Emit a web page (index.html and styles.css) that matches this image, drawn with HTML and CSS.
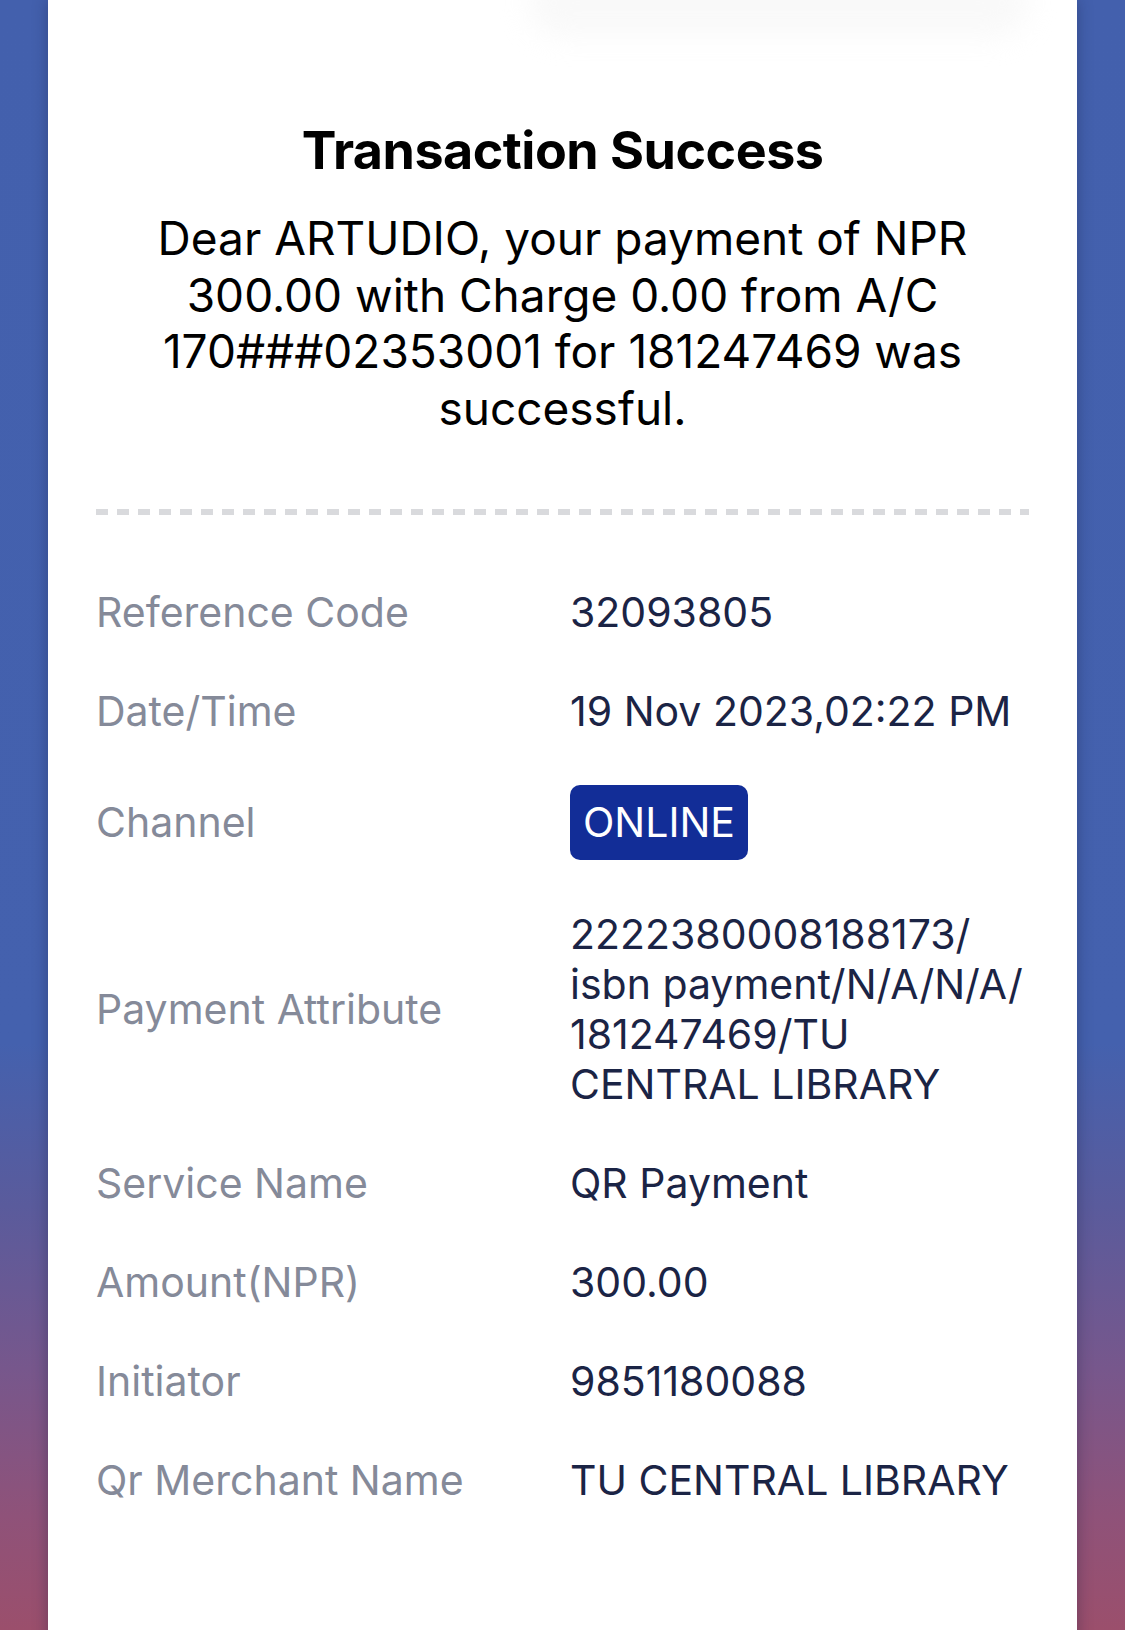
FILE: index.html
```html
<!DOCTYPE html>
<html lang="en">
<head>
<meta charset="utf-8">
<title>Transaction Success</title>
<link rel="stylesheet" href="styles.css">
</head>
<body>
<div class="page">
  <main class="card">
    <div class="ghost"></div>
    <h1 class="title">Transaction Success</h1>
    <p class="message">Dear ARTUDIO, your payment of NPR<br>300.00 with Charge 0.00 from A/C<br>170###02353001 for 181247469 was<br>successful.</p>
    <hr class="divider">
    <dl class="details">
      <dt class="label">Reference Code</dt>
      <dd class="value">32093805</dd>
      <dt class="label">Date/Time</dt>
      <dd class="value">19 Nov 2023,02:22 PM</dd>
      <dt class="label">Channel</dt>
      <dd class="value"><span class="badge">ONLINE</span></dd>
      <dt class="label">Payment Attribute</dt>
      <dd class="value">2222380008188173/<br>isbn payment/N/A/N/A/<br>181247469/TU<br>CENTRAL LIBRARY</dd>
      <dt class="label">Service Name</dt>
      <dd class="value">QR Payment</dd>
      <dt class="label">Amount(NPR)</dt>
      <dd class="value">300.00</dd>
      <dt class="label">Initiator</dt>
      <dd class="value">9851180088</dd>
      <dt class="label">Qr Merchant Name</dt>
      <dd class="value">TU CENTRAL LIBRARY</dd>
    </dl>
  </main>
</div>
</body>
</html>
```
FILE: styles.css
```css
html, body {
  margin: 0;
  padding: 0;
}
body {
  width: 1125px;
  height: 1630px;
  overflow: hidden;
  font-family: Inter, "Noto Sans", "Liberation Sans", sans-serif;
  background: linear-gradient(to bottom, #4360ad 0%, #4461ae 64%, #5a5b9c 74%, #77578c 84%, #8f5279 93%, #9b4f6c 100%);
}
.page {
  display: flex;
  justify-content: center;
  height: 1630px;
}
.card {
  position: relative;
  width: 1029px;
  height: 1700px;
  background: #ffffff;
  box-shadow: 0 0 14px rgba(20, 25, 60, 0.35);
  box-sizing: border-box;
  padding: 118px 48px 0;
  overflow: hidden;
}
.ghost {
  position: absolute;
  top: -30px;
  left: 480px;
  width: 500px;
  height: 66px;
  border-radius: 40px;
  background: #f3f3f3;
  filter: blur(14px);
  opacity: 0.5;
}
.title {
  position: relative;
  margin: 0;
  text-align: center;
  font-size: 52px;
  line-height: 65px;
  font-weight: 700;
  color: #000;
  letter-spacing: -0.5px;
}
.message {
  margin: 27px 0 0;
  text-align: center;
  font-size: 46px;
  line-height: 56.7px;
  font-weight: 400;
  color: #000;
}
.divider {
  margin: 72px 0 0;
  border: 0;
  height: 6px;
  background: repeating-linear-gradient(to right, #d9dadd 0 12px, transparent 12px 21px);
}
.details {
  margin: 72px 0 0;
  display: grid;
  grid-template-columns: 474px 1fr;
  row-gap: 49px;
  align-items: center;
  font-size: 41px;
  line-height: 50px;
}
.label {
  margin: 0;
  color: #858a99;
}
.value {
  margin: 0;
  color: #1b2445;
}
.badge {
  display: inline-flex;
  align-items: center;
  height: 75px;
  padding: 0 13px;
  border-radius: 10px;
  background: #122d97;
  color: #fff;
  vertical-align: middle;
}
```
